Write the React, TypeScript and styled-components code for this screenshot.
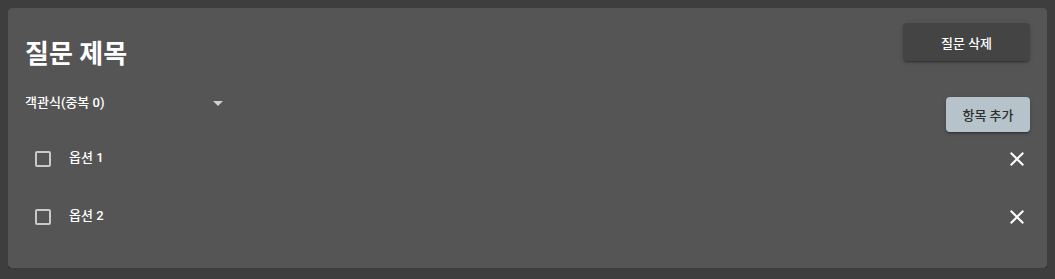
import React from "react";
import styled, { createGlobalStyle } from "styled-components";

const GlobalStyle = createGlobalStyle`
  body {
    margin: 8px;
    background: #3e3e3e;
    font-family: Roboto, "Noto Sans CJK KR", "Noto Sans", sans-serif;
    color: #fff;
  }
`;

const Card = styled.div`
  background: #555555;
  border-radius: 4px;
  box-shadow: 0 2px 2px rgba(0, 0, 0, 0.35), 0 1px 4px rgba(0, 0, 0, 0.2);
  padding: 15px 17px 22px 17px;
  box-sizing: border-box;
  height: 260px;
`;

const Header = styled.div`
  display: flex;
  justify-content: space-between;
  align-items: flex-start;
`;

const Title = styled.h2`
  margin: 15px 0 0 0;
  font-size: 26px;
  line-height: 32px;
  font-weight: 700;
`;

const Button = styled.button<{ light?: boolean }>`
  border: 0;
  border-radius: 4px;
  font-family: inherit;
  font-size: 13px;
  font-weight: 500;
  cursor: pointer;
  background: ${(p) => (p.light ? "#b6c3ca" : "#444444")};
  color: ${(p) => (p.light ? "#2e2e2e" : "#ffffff")};
  box-shadow: 0 3px 1px -2px rgba(0, 0, 0, 0.2), 0 2px 2px rgba(0, 0, 0, 0.14),
    0 1px 5px rgba(0, 0, 0, 0.12);
`;

const DeleteButton = styled(Button)`
  width: 127px;
  height: 38px;
`;

const AddButton = styled(Button)`
  width: 84px;
  height: 35px;
  margin-top: 4px;
`;

const Toolbar = styled.div`
  display: flex;
  justify-content: space-between;
  align-items: flex-start;
  margin-top: 23px;
`;

const Select = styled.div`
  width: 200px;
  height: 20px;
  display: flex;
  align-items: center;
  justify-content: space-between;
  font-size: 13px;
  line-height: 20px;
  font-weight: 500;
`;

const Arrow = styled.svg`
  width: 24px;
  height: 24px;
  fill: #d0d0d0;
  margin-right: -5px;
`;

const OptionList = styled.div`
  margin-top: -2px;
`;

const OptionRow = styled.div`
  height: 58px;
  display: flex;
  align-items: center;
  padding-left: 10px;
`;

const Check = styled.span`
  width: 16px;
  height: 16px;
  box-sizing: border-box;
  border: 2px solid #c9c9c9;
  border-radius: 2px;
  flex: none;
`;

const OptionText = styled.span`
  margin-left: 18px;
  margin-bottom: 6px;
  font-size: 13px;
  font-weight: 500;
  flex: 1;
`;

const IconButton = styled.button`
  border: 0;
  background: transparent;
  padding: 0;
  width: 24px;
  height: 24px;
  margin-right: 1px;
  cursor: pointer;
  svg {
    width: 24px;
    height: 24px;
    fill: #ffffff;
  }
`;

const options = ["옵션 1", "옵션 2"];

const App: React.FC = () => (
  <>
    <GlobalStyle />
    <Card>
      <Header>
        <Title>질문 제목</Title>
        <DeleteButton>질문 삭제</DeleteButton>
      </Header>
      <Toolbar>
        <Select>
          객관식(중복 0)
          <Arrow viewBox="0 0 24 24">
            <path d="M7 10l5 5 5-5z" />
          </Arrow>
        </Select>
        <AddButton light>항목 추가</AddButton>
      </Toolbar>
      <OptionList>
        {options.map((o) => (
          <OptionRow key={o}>
            <Check />
            <OptionText>{o}</OptionText>
            <IconButton>
              <svg viewBox="0 0 24 24">
                <path d="M19 6.41 17.59 5 12 10.59 6.41 5 5 6.41 10.59 12 5 17.59 6.41 19 12 13.41 17.59 19 19 17.59 13.41 12z" />
              </svg>
            </IconButton>
          </OptionRow>
        ))}
      </OptionList>
    </Card>
  </>
);

export default App;
